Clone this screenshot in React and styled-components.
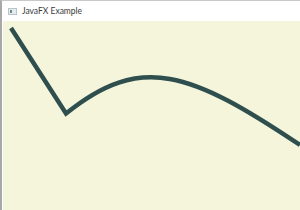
import React from 'react';
import styled, { createGlobalStyle } from 'styled-components';

const Global = createGlobalStyle`
  html, body { margin: 0; padding: 0; background: #ffffff; }
  body { width: 300px; height: 210px; overflow: hidden; }
`;

const Window = styled.div`
  width: 300px;
  height: 210px;
  box-sizing: border-box;
  display: flex;
  flex-direction: column;
  border-left: 2px solid #a8a8a8;
  border-top: 1px solid #c8c8c8;
  background: #ffffff;
`;

const TitleBar = styled.div`
  height: 20px;
  display: flex;
  align-items: center;
  gap: 5px;
  padding-left: 6px;
  background: #ffffff;
  font-family: Lato, "Open Sans", sans-serif;
  font-size: 8.5px;
  color: #3a3a3a;
`;

const AppIcon = styled.div`
  width: 9px;
  height: 7px;
  box-sizing: border-box;
  border: 1px solid #b8c4c8;
  background: #e4ecee;
  display: flex;
  align-items: center;
  padding-left: 1px;
  &::before {
    content: '';
    width: 2px;
    height: 3px;
    background: #6e8a90;
  }
`;

const Stage = styled.div`
  flex: 1;
  margin-left: 1px;
  background: #f5f5dc;
`;

const Drawing = styled.svg`
  display: block;
  width: 100%;
  height: 100%;
`;

export default function App() {
  return (
    <>
      <Global />
      <Window>
        <TitleBar>
          <AppIcon />
          <span>JavaFX Example</span>
        </TitleBar>
        <Stage>
          <Drawing viewBox="0 0 297 189">
            <path
              d="M 8 7 L 63 92.5 C 138 32, 187 50.3, 297 124"
              fill="none"
              stroke="#2f4f4f"
              strokeWidth="4.5"
              strokeLinejoin="miter"
            />
          </Drawing>
        </Stage>
      </Window>
    </>
  );
}
